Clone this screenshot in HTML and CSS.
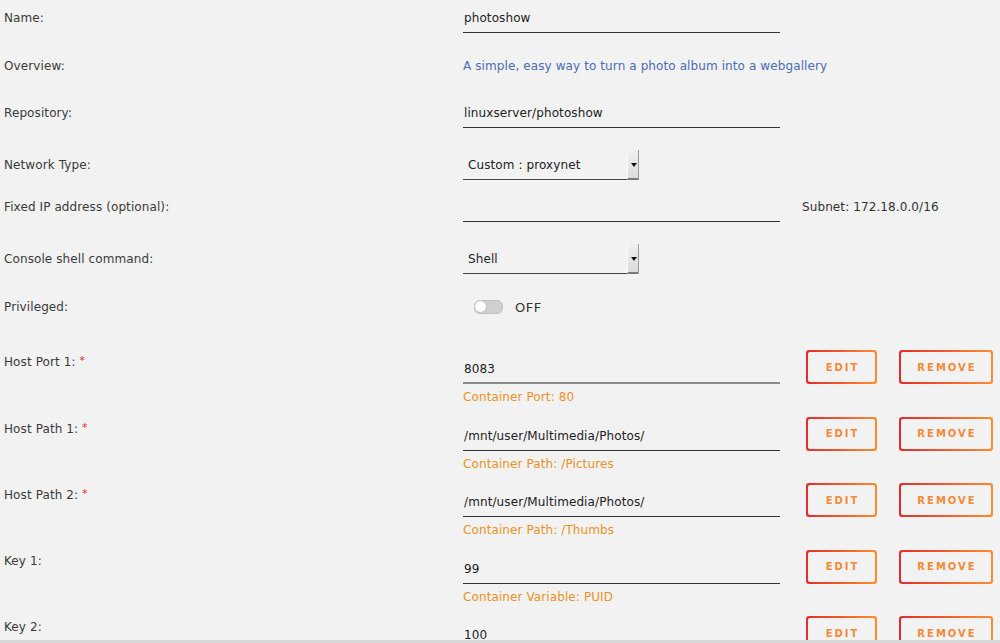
FILE: index.html
```html
<!DOCTYPE html>
<html lang="en">
<head>
  <meta charset="UTF-8">
  <title>Update Container</title>
  <link rel="stylesheet" href="styles.css">
</head>
<body>
  <!-- Basic settings -->
  <div class="form">
    <div class="row">
      <div class="label">Name:</div>
      <div class="field">photoshow</div>
    </div>
    <div class="row">
      <div class="label">Overview:</div>
      <div class="overview">A simple, easy way to turn a photo album into a webgallery</div>
    </div>
    <div class="row row-repo">
      <div class="label">Repository:</div>
      <div class="field">linuxserver/photoshow</div>
    </div>
    <div class="row row-select">
      <div class="label">Network Type:</div>
      <div class="select">
        <span>Custom : proxynet</span>
        <span class="select-arrow"></span>
      </div>
    </div>
    <div class="row row-ip">
      <div class="label">Fixed IP address (optional):</div>
      <div class="field"></div>
      <div class="subnet">Subnet: 172.18.0.0/16</div>
    </div>
    <div class="row row-select">
      <div class="label">Console shell command:</div>
      <div class="select">
        <span>Shell</span>
        <span class="select-arrow"></span>
      </div>
    </div>
    <div class="row">
      <div class="label">Privileged:</div>
      <div class="switch">
        <span class="switch-track"><span class="switch-knob"></span></span>
        <span class="switch-text">OFF</span>
      </div>
    </div>
  </div>

  <!-- Ports, paths and variables -->
  <div class="config-list">
    <div class="config">
      <div class="label">Host Port 1: <span class="req">*</span></div>
      <div class="config-value">
        <div class="field field-active">8083</div>
        <div class="desc">Container Port: 80</div>
      </div>
      <div class="buttons">
        <button class="btn"><span>EDIT</span></button>
        <button class="btn btn-wide"><span>REMOVE</span></button>
      </div>
    </div>
    <div class="config">
      <div class="label">Host Path 1: <span class="req">*</span></div>
      <div class="config-value">
        <div class="field">/mnt/user/Multimedia/Photos/</div>
        <div class="desc">Container Path: /Pictures</div>
      </div>
      <div class="buttons">
        <button class="btn"><span>EDIT</span></button>
        <button class="btn btn-wide"><span>REMOVE</span></button>
      </div>
    </div>
    <div class="config">
      <div class="label">Host Path 2: <span class="req">*</span></div>
      <div class="config-value">
        <div class="field">/mnt/user/Multimedia/Photos/</div>
        <div class="desc">Container Path: /Thumbs</div>
      </div>
      <div class="buttons">
        <button class="btn"><span>EDIT</span></button>
        <button class="btn btn-wide"><span>REMOVE</span></button>
      </div>
    </div>
    <div class="config">
      <div class="label">Key 1:</div>
      <div class="config-value">
        <div class="field">99</div>
        <div class="desc">Container Variable: PUID</div>
      </div>
      <div class="buttons">
        <button class="btn"><span>EDIT</span></button>
        <button class="btn btn-wide"><span>REMOVE</span></button>
      </div>
    </div>
    <div class="config">
      <div class="label">Key 2:</div>
      <div class="config-value">
        <div class="field">100</div>
      </div>
      <div class="buttons">
        <button class="btn"><span>EDIT</span></button>
        <button class="btn btn-wide"><span>REMOVE</span></button>
      </div>
    </div>
  </div>

  <div class="scroll-edge"></div>
</body>
</html>
```

FILE: styles.css
```css
/* General */
html, body {
  margin: 0;
  padding: 0;
  background: #f2f2f2;
  font-family: "DejaVu Sans", sans-serif;
  font-size: 12px;
  letter-spacing: 0.1px;
  color: #3a3a3a;
  overflow: hidden;
}

.form {
  display: flex;
  flex-direction: column;
  gap: 18px;
  padding: 3px 0 0 4px;
}

.row {
  display: grid;
  grid-template-columns: 459px 317px auto;
  align-items: center;
  height: 30px;
}

.row-repo {
  margin-top: -1px;
}

.row-repo + .row-select {
  margin-top: 4px;
}

.row-select + .row-ip {
  margin-top: -6px;
}

.row-ip + .row-select {
  margin-top: 4px;
}

.label {
  line-height: 30px;
  white-space: nowrap;
}

.field {
  height: 30px;
  line-height: 30px;
  border-bottom: 1px solid #333;
  color: #222;
  padding-left: 1px;
  box-sizing: border-box;
}

.field-active {
  border-bottom: 2px solid #8a8a8a;
}

.overview {
  color: #4a6bb5;
  white-space: nowrap;
}

.subnet {
  padding-left: 22px;
  color: #333;
  white-space: nowrap;
}

/* Select box */
.select {
  width: 175px;
  height: 30px;
  display: flex;
  justify-content: space-between;
  align-items: center;
  border-bottom: 1px solid #444;
  box-sizing: border-box;
  padding-left: 5px;
  color: #222;
}

.select-arrow {
  position: relative;
  width: 11px;
  height: 30px;
  margin-bottom: -1px;
  background: linear-gradient(#f0f0f0, #dcdcdc);
  border-left: 1px solid #fafafa;
  border-bottom: 2px solid #7a7a7a;
  box-shadow: 1px 0 0 #9a9a9a;
  box-sizing: border-box;
}

.select-arrow::after {
  content: '';
  position: absolute;
  left: 3px;
  top: 13px;
  border-left: 3px solid transparent;
  border-right: 3px solid transparent;
  border-top: 4px solid #111;
}

/* Toggle switch */
.switch {
  display: flex;
  align-items: center;
  padding-left: 11px;
}

.switch-track {
  width: 27px;
  height: 12px;
  border-radius: 6px;
  background: #cfcfcf;
  border: 1px solid #c0c0c0;
  position: relative;
}

.switch-knob {
  position: absolute;
  left: -1px;
  top: -1px;
  width: 13px;
  height: 13px;
  border-radius: 50%;
  background: #fff;
  border: 1px solid #c0c0c0;
  box-sizing: border-box;
}

.switch-text {
  margin-left: 12px;
  font-size: 13px;
  color: #333;
  letter-spacing: 0.5px;
}

/* Ports / paths / variables */
.config-list {
  padding: 28px 0 0 4px;
}

.config {
  display: grid;
  grid-template-columns: 459px 317px auto;
  height: 66.5px;
}

.config .label {
  line-height: 16px;
  padding-top: 3px;
}

.req {
  color: #e22;
  font-size: 11px;
  vertical-align: 2px;
}

.config-value {
  padding-top: 4px;
}

.desc {
  color: #ec9126;
  line-height: 16px;
  margin-top: 5px;
}

.buttons {
  display: flex;
  gap: 22px;
  padding-left: 26px;
}

.btn {
  width: 71px;
  height: 34px;
  padding: 2px;
  border: none;
  border-radius: 3px;
  background: linear-gradient(90deg, #e22d2d, #ff8c2f);
  cursor: pointer;
}

.btn-wide {
  width: 94px;
}

.btn span {
  display: flex;
  align-items: center;
  justify-content: center;
  height: 100%;
  border-radius: 2px;
  background: #f2f2f2;
  font-family: "DejaVu Sans", sans-serif;
  font-size: 10px;
  font-weight: bold;
  letter-spacing: 2px;
  padding-left: 2px;
  color: #f38a35;
}

.scroll-edge {
  position: fixed;
  left: 0;
  right: 0;
  bottom: 0;
  height: 3px;
  background: #d8d8d8;
}
```
